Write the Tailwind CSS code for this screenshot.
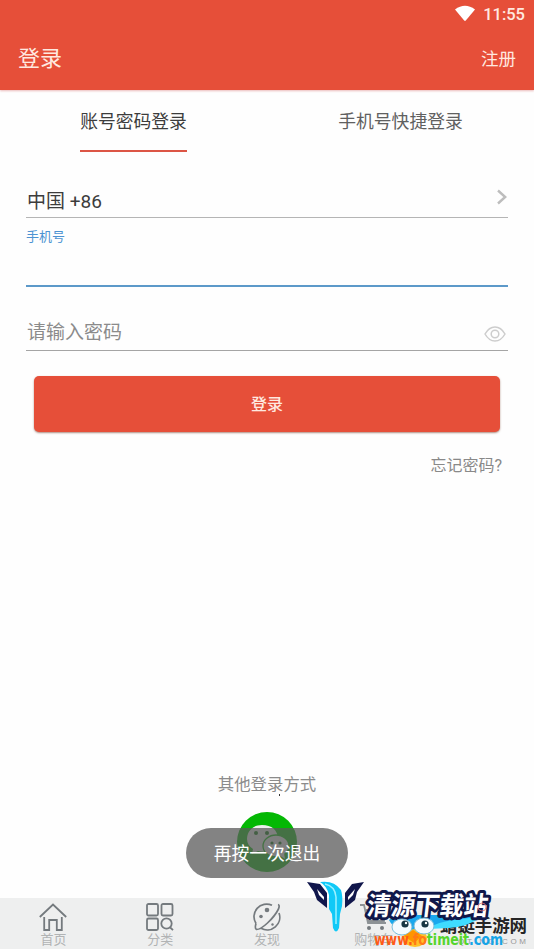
<!DOCTYPE html>
<html lang="zh-CN">
<head>
<meta charset="utf-8">
<title>登录</title>
<script src="https://cdn.jsdelivr.net/npm/@tailwindcss/browser@4"></script>
</head>
<body class="bg-white">
<div class="relative flex h-[949px] w-[534px] flex-col overflow-hidden bg-[#fefefe] font-['Roboto','Noto_Sans_CJK_SC',sans-serif]">
  <header class="flex h-[90px] shrink-0 flex-col bg-[#e64f39] text-[#ffe9e0] shadow-[0_1px_2px_rgba(200,60,60,0.35)]">
    <div class="flex h-7 items-center justify-end gap-2 pr-[9px] pt-px">
      <svg class="mb-[3px] h-[17px] w-5" viewBox="0 0 20 17"><path d="M0 4.5Q10-3 20 4.5L10.8 15.6Q10 16.4 9.2 15.6Z" fill="#fff"/></svg>
      <span class="text-[16.5px] font-medium leading-7">11:55</span>
    </div>
    <div class="flex h-[62px] items-center justify-between px-[18px]">
      <h1 class="text-[22px] leading-[60px]">登录</h1>
      <span class="text-[17.5px] leading-[60px]">注册</span>
    </div>
  </header>
  <nav class="flex h-[62px] shrink-0">
    <div class="flex w-1/2 justify-center"><span class="h-full border-b-2 border-[#dc5545] text-[17.8px] leading-[64px] text-[#3c3c3c]">账号密码登录</span></div>
    <div class="flex w-1/2 justify-center"><span class="text-[17.8px] leading-[64px] text-[#606060]">手机号快捷登录</span></div>
  </nav>
  <main class="flex flex-col px-[26px]">
    <div class="flex h-[66px] items-end justify-between border-b border-[#b5b5b5] pl-px">
      <span class="text-[19px] leading-[31px] text-[#3c3c3c]">中国 +86</span>
      <svg class="mb-3 h-4 w-3" viewBox="0 0 12 16" fill="none" stroke="#bdbdbd" stroke-width="2.4"><path d="M2 1.5 9.2 8 2 14.5"/></svg>
    </div>
    <div class="h-[69px] border-b-2 border-[#5c99c9] pt-[9px]"><span class="block text-[13px] leading-5 text-[#4d93d2]">手机号</span></div>
    <div class="flex h-16 items-center justify-between border-b border-[#a5a5a5] pt-[27px]">
      <span class="pl-px text-[19px] leading-[33px] text-[#8b8b8b]">请输入密码</span>
      <svg class="mr-[2px] mt-[3px] h-4 w-[22px]" viewBox="0 0 22 16" fill="none" stroke="#cdcdcd" stroke-width="1.5"><path d="M1 8Q5 1 11 1T21 8Q17 15 11 15T1 8Z"/><circle cx="11" cy="8" r="3.8"/></svg>
    </div>
    <button class="mx-2 mt-[25px] h-[56px] rounded-[5px] bg-[#e64f39] pt-0.5 text-[16px] font-medium text-[#ffe9e0] shadow-[0_1px_2px_rgba(110,50,30,0.55)]">登录</button>
    <span class="mr-[6px] mt-[22px] self-end text-[16px] leading-6 text-[#898989]">忘记密码?</span>
  </main>
  <section class="mt-auto flex h-[125px] shrink-0 flex-col items-center">
    <span class="text-[16.4px] leading-6 text-[#8b8b8b]">其他登录方式</span>
    <span class="ml-6 mt-[-3px] h-[2px] w-[1px] shrink-0 bg-[#333]"></span>
    <svg class="mt-[16px] h-[60px] w-[60px] shrink-0" viewBox="0 0 60 60">
      <circle cx="30" cy="30" r="30" fill="#04b804"/>
      <path d="M25 13C15 13 10 20 10 27q0 6 6 10l-1 5 6-3q7 2 13-1Q41 34 41 27q-1-14-16-14Z" fill="#eee"/>
      <ellipse cx="39" cy="34" rx="13" ry="11" fill="#eee" stroke="#04b804" stroke-width="1.3"/>
      <path d="m42 43 6 4-1-6Z" fill="#eee"/>
      <g fill="#067006"><circle cx="19" cy="21" r="2"/><circle cx="30" cy="21" r="2"/><circle cx="35" cy="31" r="1.6"/><circle cx="43" cy="31" r="1.6"/></g>
    </svg>
  </section>
  <footer class="grid h-[51px] shrink-0 grid-cols-5 bg-[#eeefef] pt-[5px] text-[13px] leading-[16px] text-[#b1b3b4]">
    <div class="flex flex-col items-center gap-px">
      <svg class="h-7 w-7 shrink-0" viewBox="0 0 28 28" fill="none" stroke="#747a7e" stroke-width="1.8"><path d="M.8 14 14 1.5 27.200 14M5.200 14v13h5V17h7.600v10h5V14"/></svg><span>首页</span>
    </div>
    <div class="flex flex-col items-center gap-px">
      <svg class="h-7 w-7 shrink-0" viewBox="0 0 28 28" fill="none" stroke="#747a7e" stroke-width="1.8"><rect x="1" y="1" width="11" height="11.5" rx="1.5"/><rect x="15.5" y="1" width="11" height="11.5" rx="1.5"/><rect x="1" y="15.5" width="11" height="11.5" rx="1.5"/><circle cx="20.5" cy="20.5" r="5.2"/><path d="m24.2 24.5 2.8 2.7"/></svg><span>分类</span>
    </div>
    <div class="flex flex-col items-center gap-px">
      <svg class="h-7 w-7 shrink-0" viewBox="0 0 28 28" fill="none" stroke="#747a7e" stroke-width="1.7"><path d="M19 2.300A12.600 12.600 0 0 0 3 20.500M26 10A12.600 12.600 0 0 1 8 25.300M3 20.500q-1.500 5 .5 6 4 0 11-6.500Q22 13 25.500 6q1.500-4-.5-4.500"/><g fill="#747a7e" stroke="none"><circle cx="14" cy="7" r="2.300"/><circle cx="8" cy="13.500" r="1.800"/><circle cx="19.500" cy="21.500" r="1.200"/></g></svg><span>发现</span>
    </div>
    <div class="flex flex-col items-center gap-px">
      <svg class="h-7 w-7 shrink-0" viewBox="0 0 28 28" fill="none" stroke="#8d9295" stroke-width="1.8"><path d="M0 2h4l4 18h18M6 7h20l-2 11H8"/><g fill="#747a7e" stroke="none"><circle cx="9" cy="25" r="2"/><circle cx="22" cy="25" r="2"/></g></svg><span>购物车</span>
    </div>
    <div></div>
  </footer>
  <div class="absolute left-[186px] top-[828px] flex h-[50px] w-[162px] items-center justify-center rounded-full bg-[#5a5a5a]/75 pt-0.5 text-[17.8px] text-white">再按一次退出</div>
  <svg class="absolute left-[300px] top-[870px] h-[79px] w-[234px]" viewBox="0 0 234 79">
    <g fill="#10164b" fill-rule="evenodd">
      <path d="M7 12 20 14 27 23V38L17 30 14 22ZM17 19 19 25 24 30V27Z"/>
      <path d="M64 12 52 14 45 23V38L55 30 57 22ZM55 19 53 25 48 30V27Z"/>
    </g>
    <path d="M20 12q14-2 21 8 2 6 1 16l-2 8-1 14q-3 7-6 0l-1-14-3-5V25q-2-9-9-13Z" fill="#10c9f7"/>
    <path d="M25 14q10 2 11 13v27" fill="none" stroke="#9bf1ff" stroke-width="1.500"/>
    <text x="140" y="62" textLength="87" font-family="Noto Sans CJK SC, sans-serif" font-size="17.500" font-weight="700" fill="#252525">蜻蜓手游网</text>
    <text x="158" y="74" textLength="68" font-family="Liberation Sans, sans-serif" font-size="8" fill="#999">QTING.COM</text>
    <path d="M89 50q4-5 20-5h70q-8 7-30 9-20 2-34 7-20 1-26-11Z" fill="#1aa8ed"/>
    <path d="M128 59q8-9 54-12-15 10-33 11Z" fill="#3fdcff"/>
    <g transform="translate(66 45) skewX(-7)">
      <text textLength="121" lengthAdjust="spacingAndGlyphs" font-family="Noto Sans CJK SC, sans-serif" font-size="26" font-weight="700" fill="#fff" stroke="#111849" stroke-width="6" stroke-linejoin="round" paint-order="stroke">清源下载站</text>
    </g>
    <circle cx="182" cy="37" r="4" fill="none" stroke="#e77575" stroke-width=".8"/>
    <ellipse cx="115" cy="68" rx="12" ry="9" fill="#ffc229"/>
    <ellipse cx="102" cy="57" rx="10" ry="8" fill="#f4fbff" stroke="#78bedb"/>
    <ellipse cx="124" cy="56" rx="10" ry="8" fill="#f4fbff" stroke="#78bedb"/>
    <circle cx="105" cy="54" r="3.600" fill="#183643"/><circle cx="125" cy="54" r="3.600" fill="#183643"/>
    <circle cx="106" cy="53" r="1.200" fill="#fff"/><circle cx="126" cy="53" r="1.200" fill="#fff"/>
    <path d="m104 66 9-6 9 6-8 7Z" fill="#ff9500"/>
    <text x="74" y="75" textLength="129" lengthAdjust="spacingAndGlyphs" font-family="DejaVu Sans, sans-serif" font-size="15.500" font-weight="700"><tspan fill="#ff5a16">www.</tspan><tspan fill="#ff7a17">fo</tspan><tspan fill="#55d52c">timeit</tspan><tspan fill="#16a5e8">.com</tspan></text>
  </svg>
</div>
</body>
</html>
